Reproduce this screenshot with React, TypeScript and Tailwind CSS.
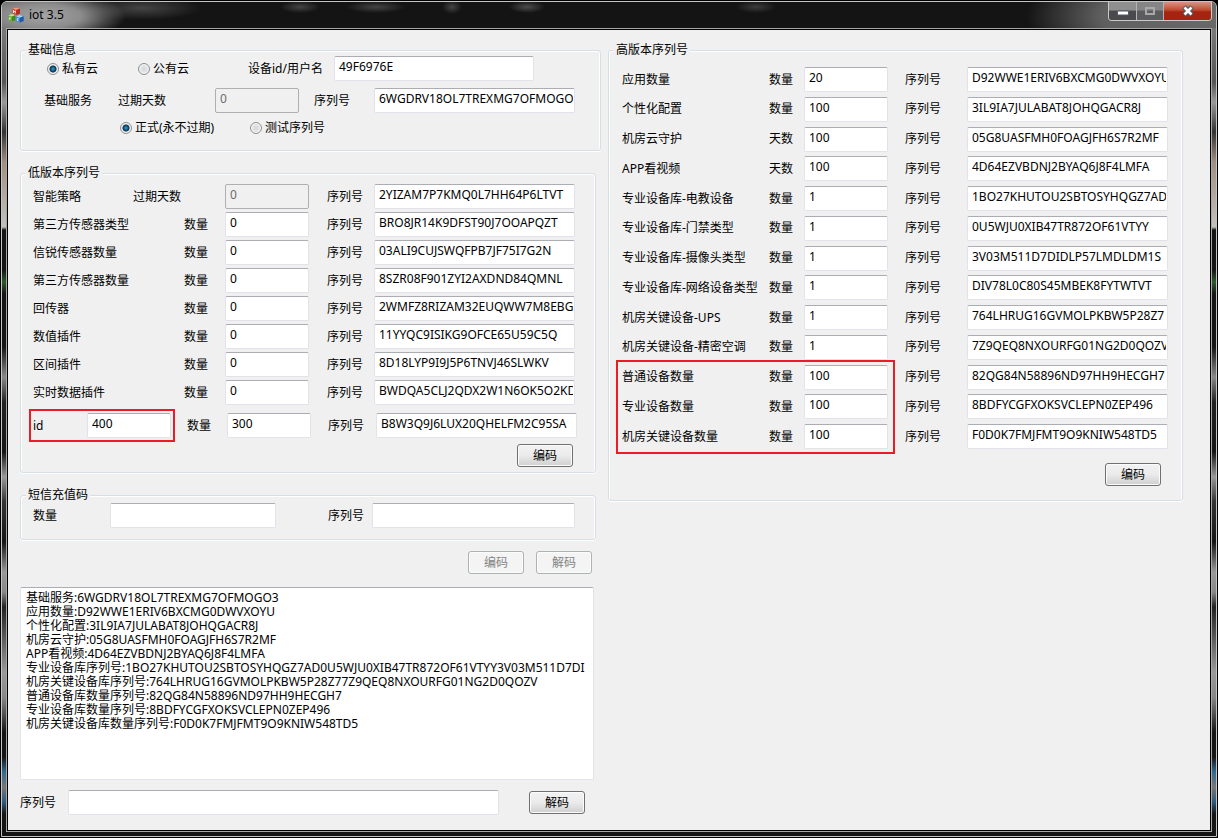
import { useState } from 'react';
import type { InputHTMLAttributes, ReactNode } from 'react';
import clsx from 'clsx';

interface LicenseItem {
  id: string;
  name: string;
  unit: string;
  value: string;
  serial: string;
  disabled?: boolean;
}

const LOW_ITEMS: LicenseItem[] = [
  { id: 'strategy', name: '智能策略', unit: '过期天数', value: '0', serial: '2YIZAM7P7KMQ0L7HH64P6LTVT', disabled: true },
  { id: 'third-type', name: '第三方传感器类型', unit: '数量', value: '0', serial: 'BRO8JR14K9DFST90J7OOAPQZT' },
  { id: 'xinrui', name: '信锐传感器数量', unit: '数量', value: '0', serial: '03ALI9CUJSWQFPB7JF75I7G2N' },
  { id: 'third-count', name: '第三方传感器数量', unit: '数量', value: '0', serial: '8SZR08F901ZYI2AXDND84QMNL' },
  { id: 'relay', name: '回传器', unit: '数量', value: '0', serial: '2WMFZ8RIZAM32EUQWW7M8EBGZ' },
  { id: 'numeric', name: '数值插件', unit: '数量', value: '0', serial: '11YYQC9ISIKG9OFCE65U59C5Q' },
  { id: 'range', name: '区间插件', unit: '数量', value: '0', serial: '8D18LYP9I9J5P6TNVJ46SLWKV' },
  { id: 'realtime', name: '实时数据插件', unit: '数量', value: '0', serial: 'BWDQA5CLJ2QDX2W1N6OK5O2KD' },
];

const HIGH_ITEMS: LicenseItem[] = [
  { id: 'app', name: '应用数量', unit: '数量', value: '20', serial: 'D92WWE1ERIV6BXCMG0DWVXOYU' },
  { id: 'custom', name: '个性化配置', unit: '数量', value: '100', serial: '3IL9IA7JULABAT8JOHQGACR8J' },
  { id: 'cloud', name: '机房云守护', unit: '天数', value: '100', serial: '05G8UASFMH0FOAGJFH6S7R2MF' },
  { id: 'video', name: 'APP看视频', unit: '天数', value: '100', serial: '4D64EZVBDNJ2BYAQ6J8F4LMFA' },
  { id: 'teach', name: '专业设备库-电教设备', unit: '数量', value: '1', serial: '1BO27KHUTOU2SBTOSYHQGZ7AD' },
  { id: 'door', name: '专业设备库-门禁类型', unit: '数量', value: '1', serial: '0U5WJU0XIB47TR872OF61VTYY' },
  { id: 'camera', name: '专业设备库-摄像头类型', unit: '数量', value: '1', serial: '3V03M511D7DIDLP57LMDLDM1S' },
  { id: 'network', name: '专业设备库-网络设备类型', unit: '数量', value: '1', serial: 'DIV78L0C80S45MBEK8FYTWTVT' },
  { id: 'ups', name: '机房关键设备-UPS', unit: '数量', value: '1', serial: '764LHRUG16GVMOLPKBW5P28Z7' },
  { id: 'aircon', name: '机房关键设备-精密空调', unit: '数量', value: '1', serial: '7Z9QEQ8NXOURFG01NG2D0QOZV' },
  { id: 'normal', name: '普通设备数量', unit: '数量', value: '100', serial: '82QG84N58896ND97HH9HECGH7' },
  { id: 'pro', name: '专业设备数量', unit: '数量', value: '100', serial: '8BDFYCGFXOKSVCLEPN0ZEP496' },
  { id: 'key', name: '机房关键设备数量', unit: '数量', value: '100', serial: 'F0D0K7FMJFMT9O9KNIW548TD5' },
];

const OUTPUT = [
  '基础服务:6WGDRV18OL7TREXMG7OFMOGO3',
  '应用数量:D92WWE1ERIV6BXCMG0DWVXOYU',
  '个性化配置:3IL9IA7JULABAT8JOHQGACR8J',
  '机房云守护:05G8UASFMH0FOAGJFH6S7R2MF',
  'APP看视频:4D64EZVBDNJ2BYAQ6J8F4LMFA',
  '专业设备库序列号:1BO27KHUTOU2SBTOSYHQGZ7AD0U5WJU0XIB47TR872OF61VTYY3V03M511D7DI',
  '机房关键设备库序列号:764LHRUG16GVMOLPKBW5P28Z77Z9QEQ8NXOURFG01NG2D0QOZV',
  '普通设备库数量序列号:82QG84N58896ND97HH9HECGH7',
  '专业设备库数量序列号:8BDFYCGFXOKSVCLEPN0ZEP496',
  '机房关键设备库数量序列号:F0D0K7FMJFMT9O9KNIW548TD5',
].join('\n');

function TextBox({ className, ...props }: InputHTMLAttributes<HTMLInputElement>) {
  return (
    <input
      type="text"
      className={clsx(
        'block h-[25px] w-full min-w-0 rounded-[2px] border border-[#e2e3ea] border-t-[#abadb3] bg-white pr-px pb-1 pl-1 leading-4 outline-none disabled:border-[#afafaf] disabled:bg-[#f0f0f0] disabled:text-[#6d6d6d]',
        className
      )}
      {...props}
    />
  );
}

function PushButton({ children, disabled, onClick }: { children: ReactNode; disabled?: boolean; onClick?: () => void }) {
  return (
    <button
      type="button"
      disabled={disabled}
      onClick={onClick}
      className="h-[23px] w-14 rounded-[3px] border border-[#707070] bg-linear-to-b from-[#f2f2f2] from-0% via-[#ebebeb] via-50% to-[#cfcfcf] leading-4 shadow-[inset_0_0_0_1px_#fcfcfc] disabled:border-[#adb2b5] disabled:from-[#f4f4f4] disabled:via-[#f4f4f4] disabled:to-[#f4f4f4] disabled:text-[#838383]"
    >
      {children}
    </button>
  );
}

function Radio({ label, name, checked, onChange }: { label: string; name: string; checked: boolean; onChange: () => void }) {
  return (
    <label className="flex items-center gap-[3px] whitespace-nowrap">
      <input
        type="radio"
        name={name}
        checked={checked}
        onChange={onChange}
        className="size-3 appearance-none rounded-full border border-[#8e8f8f] bg-radial from-[#d3d7db] to-[#f6f6f6] shadow-[inset_0_0_0_1px_#f4f4f4] checked:bg-radial checked:from-[#2f9fd8] checked:from-0% checked:via-[#0c3450] checked:via-44% checked:to-[#e6e9ec] checked:to-56%"
      />
      {label}
    </label>
  );
}

function GroupBox({ title, className, children }: { title: string; className?: string; children: ReactNode }) {
  return (
    <fieldset
      className={clsx(
        'min-w-0 rounded-[3px] border border-[#d5dfe5] shadow-[0_1px_0_#fff,inset_1px_1px_0_#fff,inset_-1px_0_0_#fff]',
        className
      )}
    >
      <legend className="ml-[5px] bg-[#f0f0f0] px-0.5 leading-3">{title}</legend>
      {children}
    </fieldset>
  );
}

function LowRow({ item }: { item: LicenseItem }) {
  return (
    <div className="grid grid-cols-[100px_92px_84px_65px_1fr] items-center">
      <span className="whitespace-nowrap">{item.name}</span>
      <label htmlFor={`${item.id}-value`} className={item.disabled ? '' : 'pl-[51px]'}>
        {item.unit}
      </label>
      <TextBox id={`${item.id}-value`} defaultValue={item.value} disabled={item.disabled} />
      <label htmlFor={`${item.id}-serial`} className="pl-[18px]">
        序列号
      </label>
      <TextBox id={`${item.id}-serial`} defaultValue={item.serial} />
    </div>
  );
}

function HighRow({ item }: { item: LicenseItem }) {
  return (
    <div className="grid grid-cols-[147px_35px_84px_79px_1fr] items-center">
      <span className="whitespace-nowrap">{item.name}</span>
      <label htmlFor={`${item.id}-value`}>{item.unit}</label>
      <TextBox id={`${item.id}-value`} defaultValue={item.value} />
      <label htmlFor={`${item.id}-serial`} className="pl-[17px]">
        序列号
      </label>
      <TextBox id={`${item.id}-serial`} defaultValue={item.serial} />
    </div>
  );
}

function AppIcon() {
  return (
    <svg width="16" height="16" viewBox="0 0 16 16" aria-hidden="true">
      <path d="M4.5 1.6 8.3.5l3.6 1.2v4.8L8.2 8 4.5 6.6z" fill="#d8412f" />
      <path d="M4.5 1.6 8.3.5l3.6 1.2-3.7 1.2z" fill="#f59a86" />
      <path d="M8.2 2.9 11.9 1.7v4.8L8.2 8z" fill="#b52a1e" />
      <path d="M.4 8.2 3.8 7l3.6 1.2v4.9l-3.5 1.5L.4 13z" fill="#6fb23c" />
      <path d="M.4 8.2 3.8 7l3.6 1.2-3.5 1.3z" fill="#c3e59a" />
      <path d="M3.9 9.5 7.4 8.2v4.9l-3.5 1.5z" fill="#3f8a22" />
      <path d="M7.8 9.3 11.9 8l3.7 1.3v4.6l-3.8 1.7-4-1.7z" fill="#3f86cf" />
      <path d="M7.8 9.3 11.9 8l3.7 1.3-3.8 1.4z" fill="#a9d4f6" />
      <path d="M11.8 10.7l3.8-1.4v4.6l-3.8 1.7z" fill="#1f5aa3" />
      <path d="M5.5 6V3.4l.9 1.4.9-1V6.4M2.8 11H1.5v1.4M10.6 11.6H9.2v1.7l1.4.5" stroke="#fff" strokeWidth=".8" fill="none" />
    </svg>
  );
}

// Glass caption: glow behind the title, faint shapes showing through, lighter right corner
function TitleBar() {
  return (
    <header className="-mx-1 flex h-[26px] items-start justify-between rounded-t-[5px] bg-[#141414] bg-[radial-gradient(82px_26px_at_42px_14px,#a4a4a4_0%,#8c8c8c_45%,transparent_100%),radial-gradient(100px_40px_at_0px_14px,#777_0%,transparent_100%),radial-gradient(60px_12px_at_140px_6px,#444_0%,transparent_100%),radial-gradient(20px_6px_at_298px_5px,#444_0%,transparent_100%),radial-gradient(30px_6px_at_374px_5px,#444_0%,transparent_100%),radial-gradient(10px_7px_at_450px_5px,#444_0%,transparent_100%),radial-gradient(18px_6px_at_525px_5px,#4c4c4c_0%,transparent_100%),radial-gradient(20px_6px_at_754px_5px,#3c3c3c_0%,transparent_100%),radial-gradient(190px_60px_at_100%_14px,#6a6a6a_0%,#606060_60%,transparent_100%)] px-1">
      <div className="flex h-[26px] items-center gap-[5px] pl-0.5">
        <AppIcon />
        <h1>iot 3.5</h1>
      </div>
      <div className="flex h-[19px] overflow-hidden rounded-b-[4px] border border-t-0 border-[#c9c9c9]">
        <button type="button" aria-label="最小化" className="flex w-7 items-center justify-center border-r border-[#b5b5b5] bg-linear-to-b from-[#8f8f8f] from-45% to-[#4a4a4c] to-50%">
          <svg width="12" height="6" viewBox="0 0 12 6" className="mt-1">
            <rect x=".5" y="1" width="11" height="4" rx="1" fill="#fff" stroke="#53566a" />
          </svg>
        </button>
        <button type="button" aria-label="最大化" disabled className="flex w-[27px] items-center justify-center border-r border-[#b5b5b5] bg-linear-to-b from-[#858585] from-45% to-[#5c5c5e] to-50%">
          <svg width="12" height="10" viewBox="0 0 12 10">
            <rect x="2" y="2" width="8" height="6" fill="none" stroke="#a9a9a9" strokeWidth="2" />
          </svg>
        </button>
        <button type="button" aria-label="关闭" className="flex w-[47px] items-center justify-center bg-linear-to-b from-[#d79384] from-0% via-[#c0492f] via-45% to-[#a52410] to-55%">
          <svg width="14" height="12" viewBox="0 0 14 12">
            <path d="M3 2l8 8M11 2l-8 8" stroke="#53566a" strokeWidth="4.8" />
            <path d="M3.5 2.5l7 7M10.5 2.5l-7 7" stroke="#fff" strokeWidth="2.6" />
          </svg>
        </button>
      </div>
    </header>
  );
}

export default function App() {
  const [cloud, setCloud] = useState('private');
  const [license, setLicense] = useState('formal');

  return (
    <div className="flex min-h-screen bg-black p-px font-['Noto_Sans','Noto_Sans_CJK_SC',sans-serif] text-[12px] leading-4 text-black">
      <div className="flex flex-1 flex-col rounded-t-[6px] border border-[#c4c4c4] bg-[#161616] bg-[linear-gradient(#777_30px,#555_80px,#999_100px,#333_130px,#a08f80_160px,#c4c0bc_225px,#151515_228px,#151515_268px,#2c5a2c_280px,#151515_292px,#151515_345px,#888_375px,#222_400px,#151515_450px,#999_475px,#333_500px,#151515_540px,#999_570px,#888_590px,#222_605px,#999_670px,#888_695px,#151515_730px,#151515_755px,#2f6a90_770px,#777_785px,#2c5a80_800px,#151515_812px)] bg-no-repeat px-1 pb-1">
        <TitleBar />
        <main className="flex-1 border border-[#a8a8a8] bg-black p-px">
          <div className="grid h-full grid-cols-[581fr_575fr] gap-[7px] bg-[#f0f0f0] pt-[14px] pr-[27px] pb-[15px] pl-3">
            <div>
              <GroupBox title="基础信息">
                <div className="flex flex-col gap-[7px] pr-[25px] pb-[14px]">
                  <div className="flex items-center pl-[26px]">
                    <div className="w-[91px]">
                      <Radio name="cloud" label="私有云" checked={cloud === 'private'} onChange={() => setCloud('private')} />
                    </div>
                    <div className="w-[110px]">
                      <Radio name="cloud" label="公有云" checked={cloud === 'public'} onChange={() => setCloud('public')} />
                    </div>
                    <label htmlFor="device" className="w-[86px]">
                      设备id/用户名
                    </label>
                    <div className="w-[200px]">
                      <TextBox id="device" defaultValue="49F6976E" />
                    </div>
                  </div>
                  <div className="grid grid-cols-[74px_97px_84px_75px_1fr] items-center pl-[23px]">
                    <span>基础服务</span>
                    <label htmlFor="base-days">过期天数</label>
                    <TextBox id="base-days" defaultValue="0" disabled />
                    <label htmlFor="base-serial" className="pl-[15px]">
                      序列号
                    </label>
                    <TextBox id="base-serial" defaultValue="6WGDRV18OL7TREXMG7OFMOGO3" />
                  </div>
                  <div className="flex pl-[99px]">
                    <div className="w-[130px]">
                      <Radio name="license" label="正式(永不过期)" checked={license === 'formal'} onChange={() => setLicense('formal')} />
                    </div>
                    <Radio name="license" label="测试序列号" checked={license === 'test'} onChange={() => setLicense('test')} />
                  </div>
                </div>
              </GroupBox>

              <GroupBox title="低版本序列号" className="mt-4 mr-[5px]">
                <div className="pt-[5px] pr-5 pb-[5px] pl-3">
                  <div className="flex flex-col gap-[3px]">
                    {LOW_ITEMS.map(item => (
                      <LowRow key={item.id} item={item} />
                    ))}
                  </div>
                  <div className="mt-2 -mr-0.5 grid grid-cols-[54px_84px_16px_40px_84px_65px_1fr] items-center">
                    <div className="relative col-span-2 grid grid-cols-subgrid items-center">
                      <label htmlFor="custom-id">id</label>
                      <TextBox id="custom-id" defaultValue="400" />
                      <div className="pointer-events-none absolute -inset-x-1 -inset-y-1 border-2 border-[#ed1c24]" />
                    </div>
                    <label htmlFor="custom-count" className="col-start-4">
                      数量
                    </label>
                    <TextBox id="custom-count" defaultValue="300" />
                    <label htmlFor="custom-serial" className="pl-[17px]">
                      序列号
                    </label>
                    <TextBox id="custom-serial" defaultValue="B8W3Q9J6LUX20QHELFM2C95SA" />
                  </div>
                  <div className="mt-1.5 flex justify-end pr-0.5">
                    <PushButton>编码</PushButton>
                  </div>
                </div>
              </GroupBox>

              <GroupBox title="短信充值码" className="mt-4 mr-[5px]">
                <div className="grid grid-cols-[77px_166px_96px_1fr] items-center pt-0.5 pr-5 pb-[11px] pl-3">
                  <label htmlFor="sms-count">数量</label>
                  <TextBox id="sms-count" />
                  <label htmlFor="sms-serial" className="pl-[52px]">
                    序列号
                  </label>
                  <TextBox id="sms-serial" />
                </div>
              </GroupBox>

              <div className="mt-[11px] mr-[9px] flex justify-end gap-3">
                <PushButton disabled>编码</PushButton>
                <PushButton disabled>解码</PushButton>
              </div>

              <div className="mt-[13px] mr-[7px]">
                <textarea
                  aria-label="输出"
                  wrap="off"
                  defaultValue={OUTPUT}
                  className="block h-[193px] w-full resize-none overflow-hidden rounded-[2px] border border-[#e2e3ea] border-t-[#abadb3] bg-white px-[5px] py-[3px] leading-[14px] outline-none"
                />
              </div>

              <div className="mt-[10px] mr-4 flex items-center">
                <label htmlFor="decode" className="w-12">
                  序列号
                </label>
                <div className="mr-[30px] flex-1">
                  <TextBox id="decode" />
                </div>
                <PushButton>解码</PushButton>
              </div>
            </div>

            <div>
              <GroupBox title="高版本序列号">
                <div className="pt-[11px] pr-[14px] pb-[14px] pl-[13px]">
                  <div className="relative flex h-[382px] flex-col justify-between">
                    {HIGH_ITEMS.map(item => (
                      <HighRow key={item.id} item={item} />
                    ))}
                    <div className="pointer-events-none absolute -bottom-[5px] -left-1.5 h-[94px] w-[279px] border-2 border-[#ed1c24]" />
                  </div>
                  <div className="mt-[14px] flex justify-end pr-[7px]">
                    <PushButton>编码</PushButton>
                  </div>
                </div>
              </GroupBox>
            </div>
          </div>
        </main>
      </div>
    </div>
  );
}
